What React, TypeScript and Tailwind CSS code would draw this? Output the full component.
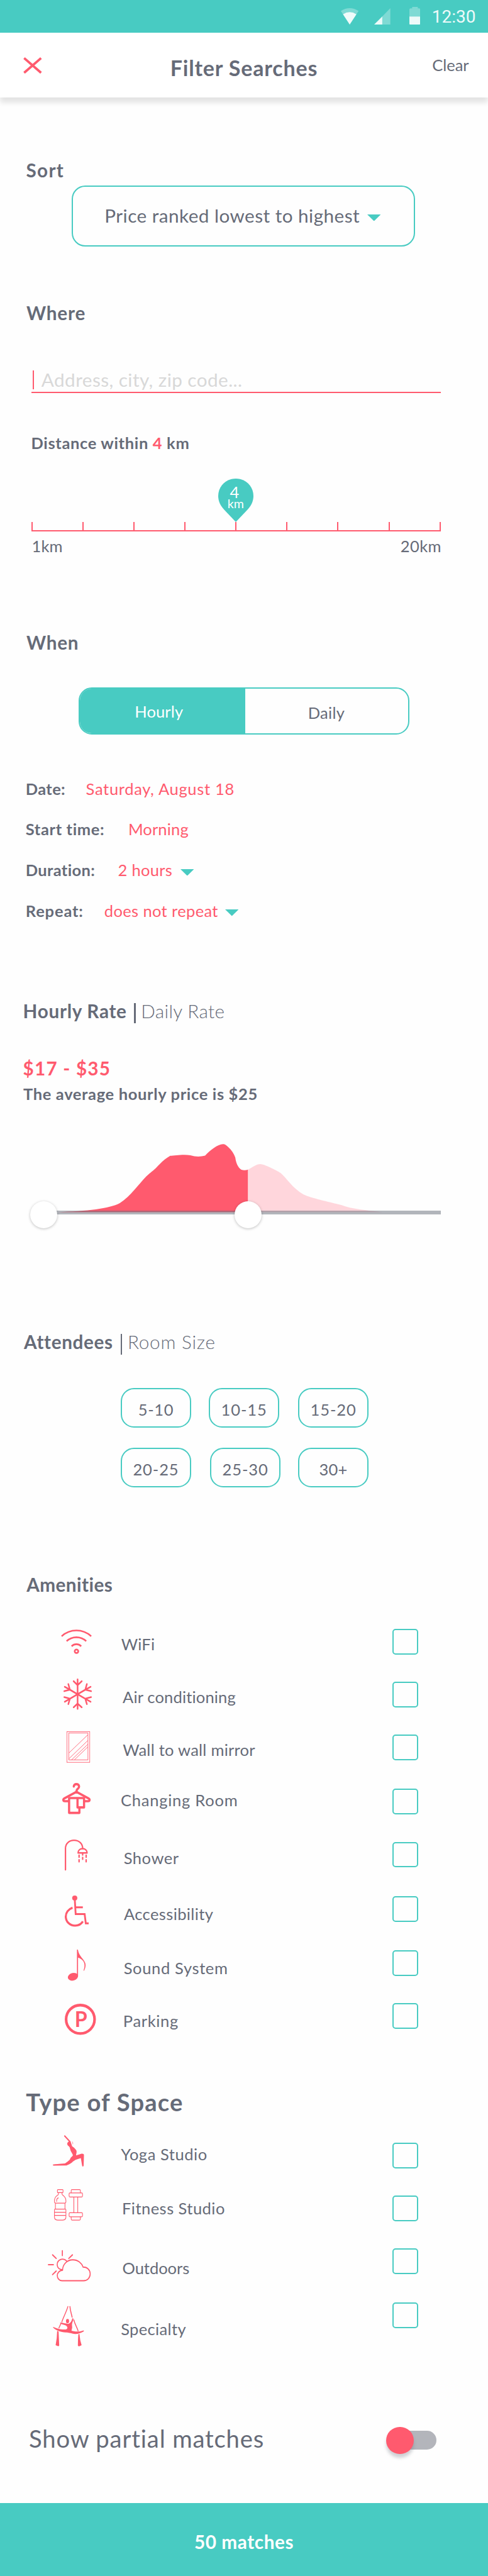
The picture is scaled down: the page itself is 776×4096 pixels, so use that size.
import type { ReactNode } from "react";

const Caret = ({ className }: { className: string }) => (
  <svg className={className} width="21.5" height="10.6" viewBox="0 0 22 11" preserveAspectRatio="none">
    <path d="M0 0H22L11 11Z" fill="#48cbc2" />
  </svg>
);

const WifiIcon = () => (
  <svg width="49" height="38.9" viewBox="393 429 198 149" preserveAspectRatio="none" className="overflow-visible" fill="none" stroke="#ff5a6e" strokeWidth="10.5">
    <path d="M397 470C451 423 533 423 587 470M429 500C464 468 520 468 555 500M461 531C479 515 505 515 523 531" />
    <ellipse cx="492.5" cy="562" rx="11.5" ry="10.5" />
  </svg>
);

const SnowIcon = () => (
  <svg width="44.8" height="49.6" viewBox="409 726 181 190" preserveAspectRatio="none" className="overflow-visible" fill="none" stroke="#ff5a6e" strokeWidth="10" strokeLinecap="round" strokeLinejoin="round">
    <path d="M499.500 731V911M474 742L499.500 766L526 742M474 901L499.500 878L526 901" />
    <path d="M417 776L450 794L549 849L583 867M440 760L450 794L414 803M559 882L549 849L586 839" />
    <path d="M583 776L549 794L450 849L417 867M559 760L549 794L586 803M440 882L450 849L414 839" />
  </svg>
);

const MirrorIcon = () => (
  <svg width="37.1" height="49.6" viewBox="427 1048 150 190" preserveAspectRatio="none" className="overflow-visible" fill="none" stroke="#ff5a6e" strokeWidth="3.4">
    <rect x="428.5" y="1049.5" width="147" height="187" />
    <rect x="440.500" y="1058" width="123.500" height="163.500" />
    <path d="M441 1180L564 1068M441 1215L564 1103M459 1221L564 1126M477 1221L564 1142" />
  </svg>
);

const HangerIcon = () => (
  <svg width="45.300" height="49.4" viewBox="401 1362 183 189" preserveAspectRatio="none" className="overflow-visible" fill="none" stroke="#ff5a6e" strokeWidth="14" strokeLinecap="round" strokeLinejoin="round">
    <path d="M475 1384C475 1364 509 1364 509 1384C509 1400 492 1394 492 1416" />
    <path d="M440 1473H417C406 1473 405 1461 414 1456L492 1416L570 1456C580 1461 578 1473 567 1473H547" />
    <path d="M445 1454H541V1511H499V1454M445 1454V1544H511V1514" />
  </svg>
);

const ShowerIcon = () => (
  <svg width="36.6" height="49.4" viewBox="418 182 148 189" preserveAspectRatio="none" className="overflow-visible" fill="none" stroke="#ff5a6e" strokeWidth="9" strokeLinecap="round" strokeLinejoin="round">
    <path d="M422.500 366V236C422.500 205 448 186.500 478 186.500C508 186.500 533 206 533 236" />
    <path d="M503.500 263.500C503.500 248 516 237.500 532.500 237.500S561.500 248 561.500 263.500Z" />
    <path d="M510 277V289M510 305V317M533 266V276M533 291V302M555.500 277V289M555.500 305V317" />
  </svg>
);

const WheelchairIcon = () => (
  <svg width="37.900" height="49.6" viewBox="418 520 153 190" preserveAspectRatio="none" className="overflow-visible" fill="none" stroke="#ff5a6e" strokeWidth="11.500">
    <ellipse cx="482" cy="535.500" rx="16.500" ry="15.500" fill="#ff5a6e" stroke="none" />
    <path d="M482.500 548L488 633H545.500L553 689.500H571.500M488 592H534" />
    <path d="M468 594C440 603 424.500 625 424.500 648C424.500 680 451 703.500 484 703.500C507 703.500 525 693 534 678" strokeWidth="13" />
  </svg>
);

const NoteIcon = () => (
  <svg width="28" height="49.6" viewBox="436 850 113 190" preserveAspectRatio="none" className="overflow-visible" fill="#ff5a6e">
    <path d="M494 850H500C506 880 520 893 534 910C546 926 549.500 933 549.500 945C549.500 960 543 973 539 979L536 977C545 955 545 935 534 920C525 909 512 902 501 899V1010H494Z" />
    <ellipse cx="468.500" cy="1015.500" rx="33.500" ry="23" transform="rotate(-14 468.500 1015.500)" />
  </svg>
);

const ParkingIcon = () => (
  <svg width="49.500" height="49.6" viewBox="418 1180 200 190" preserveAspectRatio="none" className="overflow-visible">
    <ellipse cx="518" cy="1275" rx="91.500" ry="86.500" fill="none" stroke="#ff5a6e" strokeWidth="17" />
    <text x="482" y="1321.500" fill="#ff5a6e" className="font-['Lato',sans-serif] text-[130px] font-bold">P</text>
  </svg>
);

const YogaIcon = () => (
  <svg width="49.500" height="50" viewBox="340 327 200 169" preserveAspectRatio="none" className="overflow-visible" fill="#ff5a6e">
    <path d="M412 332Q414 326 419 329L447 354Q455 359 457 368L464 387Q478 393 490 407Q494 412 492.500 420L489 436L525 427Q540 426 540 434L538 490Q537 496 533 496Q529 496 528 490L520 450L486 460Q470 468 462 475Q444 486 428 490L344 491Q338 489 341 485Q360 482 418 479Q436 470 449 459Q452 448 468 438Q470 433 466 428Q452 412 448 392L444 388Q432 383 432 373Q434 365 443 361L414 335Z" />
    <path d="M465 362Q470 368 468 376" fill="none" stroke="#ff5a6e" strokeWidth="2.500" />
  </svg>
);

const FitnessIcon = () => (
  <svg width="45.800" height="49.700" viewBox="348 620 185 168" preserveAspectRatio="none" className="overflow-visible" fill="none" stroke="#ff5a6e" strokeWidth="4.300">
    <rect x="369.500" y="622" width="36" height="16.500" rx="3" />
    <path d="M376 638V645Q376 650 368 654C356 661 350.500 670 350.500 682V688Q350.500 694.500 357 694.500H418Q424 694.500 424 688V682C424 670 417 661 407 654Q399 650 399 645V638" />
    <path d="M356.500 695V727M418 695V727M350 744H424M350 760.500H424M364.500 687Q362 669 377 666" />
    <path d="M354 727H420Q424 727 424 731V770Q424 786 404 786H370Q350.500 786 350.500 770V731Q350.500 727 354 727Z" />
    <rect x="444.500" y="640" width="86" height="21.500" rx="5" />
    <rect x="444.500" y="746" width="86" height="22" rx="5" />
    <path d="M458 640V627Q458 622 463 622H511Q517 622 517 627V640M458 768V781Q458 786 463 786H511Q517 786 517 781V768M475 661V746M500 661V746" />
  </svg>
);

const WeatherIcon = () => (
  <svg width="68.300" height="49.400" viewBox="305 948 276 167" preserveAspectRatio="none" className="overflow-visible" fill="none" stroke="#ff5a6e" strokeWidth="6.500" strokeLinecap="round" strokeLinejoin="round">
    <path d="M398.500 951V977M335.500 973L359 992M463.500 973L440 992M309 1025.500H341M335.500 1079L359 1060" strokeWidth="7" />
    <path d="M427 1006C401 985 364.500 1000 365.500 1027C366.500 1042 380 1052 398 1053" />
    <path d="M400 1055.500C400 1025 428 999.500 466 999.500C498 999.500 522 1016 532 1038.500C560 1038.500 577.500 1055 577.500 1075C577.500 1096 560 1112 535 1112H397C378 1112 366 1099 366 1084C366 1069 380 1056 400 1055.500Z" />
  </svg>
);

const AerialIcon = () => (
  <svg width="49.500" height="63.900" viewBox="340 1247 200 216" preserveAspectRatio="none" className="overflow-visible" fill="#ff5a6e">
    <path d="M437 1249C428 1275 410 1303 398 1331M391 1342L379 1364" fill="none" stroke="#ff5a6e" strokeWidth="5.500" strokeLinecap="round" />
    <path d="M450 1249C452 1272 460 1290 464 1306M475 1321C482 1345 497 1363 502 1379" fill="none" stroke="#ff5a6e" strokeWidth="6" strokeLinecap="round" />
    <ellipse cx="434.500" cy="1327" rx="10" ry="11.500" />
    <path d="M341 1361Q343 1356 348 1360C380 1372 410 1373 424 1372Q434 1370 434 1361C428 1345 400 1348 388 1340Q384 1335 390 1335C410 1337 430 1342 440 1342Q458 1336 464 1316Q468 1308 472 1314C472 1325 464 1335 463 1345Q467 1360 460 1379C490 1386 515 1384 537 1377Q541 1378 539 1382C515 1394 490 1400 465 1394C450 1390 430 1388 425 1388C390 1386 360 1378 341 1361Z" />
    <path d="M368 1379L377 1384L381 1458Q375 1464 371 1461L358 1457Q367 1420 368 1379ZM504 1398L511 1396Q514 1430 525 1457L512 1462Q503 1463 501 1458Q501 1425 504 1398Z" />
  </svg>
);

type Option = { label: string; row: string; iconBox: string; text: string; icon: ReactNode };

const amenities: Option[] = [
  { label: "WiFi", row: "h-[84.3px]", iconBox: "pl-[97.2px] pt-[11.2px]", text: "ml-[-3.8px] mt-[14.2px] tracking-[0.2px]", icon: <WifiIcon /> },
  { label: "Air conditioning", row: "h-[83.8px]", iconBox: "pl-[101.2px] pt-[4.4px]", text: "ml-[-1.5px] mt-[14.1px] tracking-[0.17px]", icon: <SnowIcon /> },
  { label: "Wall to wall mirror", row: "h-[86.3px]", iconBox: "pl-[105.7px] pt-[4.8px]", text: "ml-[-1.3px] mt-[14.1px] tracking-[0.26px]", icon: <MirrorIcon /> },
  { label: "Changing Room", row: "h-[84.3px]", iconBox: "pl-[99.2px] pt-[0.5px]", text: "ml-[-4.5px] mt-[7.5px] tracking-[0.75px]", icon: <HangerIcon /> },
  { label: "Shower", row: "h-[86.3px]", iconBox: "pl-[103.4px] pt-[6.7px]", text: "ml-[0.2px] mt-[15.8px] tracking-[0.53px]", icon: <ShowerIcon /> },
  { label: "Accessibility", row: "h-[85.9px]", iconBox: "pl-[103.4px] pt-[8.7px]", text: "ml-[0.4px] mt-[17.8px] tracking-[0.4px]", icon: <WheelchairIcon /> },
  { label: "Sound System", row: "h-[84.3px]", iconBox: "pl-[107.9px] pt-[9px]", text: "ml-[0.2px] mt-[18.4px] tracking-[0.65px]", icon: <NoteIcon /> },
  { label: "Parking", row: "h-[70px]", iconBox: "pl-[103.4px] pt-[10.9px]", text: "ml-[-0.7px] mt-[18.2px] tracking-[0.66px]", icon: <ParkingIcon /> },
];

const spaces: Option[] = [
  { label: "Yoga Studio", row: "h-[84.2px] pt-[3.8px]", iconBox: "pl-[84.1px]", text: "ml-[-4.3px] mt-[9.9px] tracking-[0.56px]", icon: <YogaIcon /> },
  { label: "Fitness Studio", row: "h-[84px] pt-[6px]", iconBox: "pl-[86.1px] pt-[0.3px]", text: "ml-[-2.5px] mt-[9.7px] tracking-[0.46px]", icon: <FitnessIcon /> },
  { label: "Outdoors", row: "h-[86.3px] pt-[6px]", iconBox: "pl-[75.5px] pt-[13.2px]", text: "ml-[-2px] mt-[20.6px] tracking-[-0.05px]", icon: <WeatherIcon /> },
  { label: "Specialty", row: "h-[90px] pt-[6px]", iconBox: "pl-[84.1px] pt-[15.3px]", text: "ml-[-4.3px] mt-[31.2px] tracking-[0.35px]", icon: <AerialIcon /> },
];

const OptionRow = ({ label, row, iconBox, text, icon, box }: Option & { box: string }) => (
  <label className={`flex shrink-0 items-start ${row}`}>
    <span className={`block w-[196.5px] shrink-0 ${iconBox}`}>{icon}</span>
    <span className={`w-[300px] shrink-0 ${text}`}>{label}</span>
    <span className={`mr-[111px] ml-auto h-[40.8px] w-[40.8px] rounded-[5px] border-2 border-[#48cbc2] ${box}`} />
  </label>
);

const Chip = ({ children, className }: { children: string; className: string }) => (
  <button className={`flex h-[62.6px] w-[112px] shrink-0 items-center justify-center rounded-[21px] border-2 border-[#48cbc2] pt-[5px] ${className}`}>
    {children}
  </button>
);

export default function App() {
  return (
    <div className="flex h-[4096px] w-[776px] flex-col overflow-hidden bg-[#fefefe] font-['Lato',sans-serif] text-[25.5px] leading-[40px] whitespace-nowrap text-[#666b78]">
      <div className="flex h-[51.7px] shrink-0 items-start bg-[#48cbc2] pl-[541.9px]">
        <svg className="mt-[13px]" width="28.2" height="26" viewBox="0 0 57 99" preserveAspectRatio="none" fill="#fff">
          <path d="M0 17Q28.500 -17 57 17L28.500 99Z" opacity=".3" />
          <path d="M7 37Q28.500 11 50 37L28.500 99Z" opacity=".88" />
        </svg>
        <svg className="ml-[24.8px] mt-[13px]" width="25.700" height="26" viewBox="0 0 52 99" preserveAspectRatio="none" fill="#fff">
          <path d="M52 0V99H26V50Z" opacity=".3" />
          <path d="M26 50V99H0Z" opacity=".9" />
        </svg>
        <svg className="ml-[30.2px] mt-[10.7px]" width="17.300" height="28.300" viewBox="0 0 35 108" preserveAspectRatio="none" fill="#fff">
          <path d="M9 0H27V9H31Q35 9 35 16V58H0V16Q0 9 4 9H9Z" opacity=".3" />
          <path d="M0 58H35V101Q35 108 31 108H4Q0 108 0 101Z" opacity=".9" />
        </svg>
        <span className="mt-[7px] ml-[18.7px] font-['Roboto'] text-[28px] text-white/90">12:30</span>
      </div>

      <header className="z-10 flex h-[103.5px] shrink-0 items-start bg-white pl-[37.1px] shadow-[0_8px_8px_rgba(0,0,0,0.11)]">
        <svg className="mt-[38.9px]" width="29.7" height="26.2" viewBox="0 0 30 26" fill="none" stroke="#ff5a6e" strokeWidth="3.800">
          <path d="M1.400 1.200L28.600 24.800M28.600 1.200L1.400 24.800" />
        </svg>
        <h1 className="mt-[32.5px] ml-[203.9px] w-[240px] text-[34px] leading-[48px] font-bold tracking-[0.84px]">Filter Searches</h1>
        <button className="mt-[31px] ml-[176.7px] tracking-[-0.07px]">Clear</button>
      </header>

      <h2 className="mt-[96.2px] ml-[41.5px] text-[29.7px] font-bold tracking-[1.3px]">Sort</h2>
      <button className="mt-[4px] ml-[114.3px] flex h-[96.7px] w-[545.4px] shrink-0 items-center rounded-[21.5px] border-2 border-[#48cbc2] pb-[2.4px] pl-[50px] text-left text-[29.7px]">
        <span className="w-[417.7px] tracking-[0.46px]">Price ranked lowest to highest</span>
        <Caret className="mt-[6.6px]" />
      </button>

      <h2 className="mt-[86px] ml-[42px] text-[29.7px] font-bold tracking-[0.82px]">Where</h2>
      <div className="mt-[70.5px] ml-[49.5px] flex h-[36.6px] w-[651.3px] shrink-0 items-start border-b-2 border-[#ff5a6e] pl-[2.5px]">
        <span className="h-[30px] w-[2px] bg-[#ff5a6e]" />
        <span className="ml-[11.8px] text-[29.7px] leading-[30px] tracking-[0.44px] text-[#d8d8d8]">Address, city, zip code...</span>
      </div>
      <p className="mt-[59.2px] ml-[49.5px] font-bold tracking-[0.65px]">
        Distance within <span className="text-[#ff5a6e]">4</span> km
      </p>
      <div className="relative mt-[36.6px] ml-[346.9px] flex h-[69px] w-[56px] shrink-0 flex-col items-center text-white">
        <svg className="absolute inset-0" width="56" height="69" viewBox="0 0 56 69" fill="#48cbc2">
          <path d="M28 0C44 0 56 12.500 56 27.500C56 36 52.500 43 46.500 49.500L28 69L9.500 49.500C3.500 43 0 36 0 27.500C0 12.500 12 0 28 0Z" />
        </svg>
        <span className="relative mt-[11.8px] pr-[4px] leading-[18px]">4</span>
        <span className="relative mt-[1.6px] text-[19.6px] leading-[18px]">km</span>
      </div>
      <div className="ml-[49.5px] flex h-[15px] w-[651.3px] shrink-0 justify-between border-b-2 border-[#ff5a6e]">
        {[1, 2, 3, 4, 5, 6, 7, 8, 9].map((n) => (
          <span key={n} className="w-[2px] bg-[#ff5a6e]" />
        ))}
      </div>
      <div className="mt-[2.9px] mr-[74px] ml-[50.5px] flex justify-between">
        <span className="tracking-[0.13px]">1km</span>
        <span className="tracking-[0.46px]">20km</span>
      </div>

      <h2 className="mt-[113.9px] ml-[42px] text-[29.7px] font-bold tracking-[0.71px]">When</h2>
      <div className="mt-[51.2px] ml-[125.2px] flex h-[75.3px] w-[525.6px] shrink-0 overflow-hidden rounded-[21px] border-2 border-[#48cbc2]">
        <button className="flex w-[263px] items-center justify-center bg-[#48cbc2] pt-[1px] pr-[12px] tracking-[0.13px] text-white">Hourly</button>
        <button className="flex flex-1 items-center justify-center pt-[5px] pr-[1px] tracking-[0.28px]">Daily</button>
      </div>

      <div className="mt-[65.6px] ml-[40.8px] flex flex-col gap-[24.67px]">
        <div className="flex items-start">
          <span className="w-[95.8px] font-bold tracking-[0.37px]">Date:</span>
          <span className="tracking-[0.67px] text-[#ff5a6e]">Saturday, August 18</span>
        </div>
        <div className="flex items-start">
          <span className="w-[163.1px] font-bold tracking-[0.63px]">Start time:</span>
          <span className="tracking-[0.15px] text-[#ff5a6e]">Morning</span>
        </div>
        <div className="flex items-start">
          <span className="w-[146.8px] font-bold tracking-[0.33px]">Duration:</span>
          <span className="w-[99.4px] tracking-[0.28px] text-[#ff5a6e]">2 hours</span>
          <Caret className="mt-[18.7px]" />
        </div>
        <div className="flex items-start">
          <span className="w-[125px] font-bold tracking-[0.83px]">Repeat:</span>
          <span className="w-[192px] tracking-[0.37px] text-[#ff5a6e]">does not repeat</span>
          <Caret className="mt-[18.7px]" />
        </div>
      </div>

      <div className="mt-[120.3px] ml-[36.6px] flex h-[40px] shrink-0 items-start text-[29.7px]">
        <h2 className="w-[176.7px] font-bold tracking-[0.71px]">Hourly Rate</h2>
        <span className="mt-[7.2px] h-[32px] w-[2.5px] bg-[#666b78]" />
        <span className="ml-[8.4px] font-light tracking-[0.37px]">Daily Rate</span>
      </div>
      <p className="mt-[50.6px] ml-[36.6px] text-[29.7px] font-bold tracking-[1.19px] text-[#ff5a6e]">$17 - $35</p>
      <p className="mt-[0.6px] ml-[37px] font-bold tracking-[0.65px]">The average hourly price is $25</p>

      <div className="relative mt-[59.6px] h-[135.8px] w-full shrink-0">
        <svg width="776" height="135.8" viewBox="0 980 1568 520" preserveAspectRatio="none">
          <path
            d="M186 1395C280 1388 350 1375 385 1340C420 1298 445 1225 470 1177C485 1150 490 1146 500 1128C515 1098 530 1070 547 1052C560 1051 590 1041 612 1049C628 1059 645 1058 659 1051C675 1017 700 982 716 981C724 981 727 989 733 998C745 1019 752 1040 756 1062C759 1110 770 1130 776 1137Q786 1143 797 1136V1395Z"
            fill="#ff5a6e"
          />
          <path
            d="M797 1136C810 1126 820 1104 837 1103C850 1104 885 1138 902 1157C920 1185 940 1250 975 1287C1000 1310 1060 1333 1098 1352C1125 1375 1190 1385 1228 1395H797Z"
            fill="#ffd6dc"
          />
        </svg>
        <span className="absolute top-[106px] left-[69px] h-[6.6px] w-[631.8px] bg-[#666b78]/50" />
        <span className="absolute top-[90.9px] left-[47.5px] h-[43.3px] w-[43.3px] rounded-full bg-white shadow-[0_1px_4px_rgba(0,0,0,0.25)]" />
        <span className="absolute top-[90.9px] left-[373.1px] h-[43.3px] w-[43.3px] rounded-full bg-white shadow-[0_1px_4px_rgba(0,0,0,0.25)]" />
      </div>

      <div className="mt-[159.3px] ml-[38.1px] flex h-[40px] shrink-0 items-start text-[29.7px]">
        <h2 className="w-[153.9px] font-bold tracking-[0.63px]">Attendees</h2>
        <span className="mt-[7.2px] h-[32.4px] w-[2px] bg-[#666b78]" />
        <span className="ml-[8.9px] font-light tracking-[0.79px]">Room Size</span>
      </div>
      <div className="mt-[53.4px] ml-[192px] flex flex-col gap-[32.3px]">
        <div className="flex">
          <Chip className="tracking-[0.65px]">5-10</Chip>
          <Chip className="ml-[28.1px] tracking-[0.9px]">10-15</Chip>
          <Chip className="ml-[30px] tracking-[0.9px]">15-20</Chip>
        </div>
        <div className="flex">
          <Chip className="tracking-[0.9px]">20-25</Chip>
          <Chip className="ml-[30.1px] tracking-[0.9px]">25-30</Chip>
          <Chip className="ml-[28px] tracking-[0.21px]">30+</Chip>
        </div>
      </div>

      <h2 className="mt-[135.2px] ml-[42.2px] text-[29.7px] font-bold tracking-[0.44px]">Amenities</h2>
      <div className="mt-[39.9px] flex shrink-0 flex-col">
        {amenities.map((o) => (
          <OptionRow key={o.label} {...o} box="mt-[10px]" />
        ))}
      </div>

      <h2 className="mt-[73.1px] ml-[41.3px] text-[38.2px] leading-[48px] font-bold tracking-[1.18px]">Type of Space</h2>
      <div className="mt-[24.8px] flex shrink-0 flex-col">
        {spaces.map((o, i) => (
          <OptionRow key={o.label} {...o} box={i === 0 ? "mt-[12.2px]" : "mt-[10px]"} />
        ))}
      </div>

      <div className="mt-[116.5px] ml-[46px] flex h-[48px] shrink-0 items-start text-[38.2px] leading-[48px]">
        <span className="mt-[0.8px] w-[575px] tracking-[0.86px]">Show partial matches</span>
        <span className="relative mt-[13.1px] h-[30.3px] w-[72.9px] rounded-full bg-[#b3b5bb]">
          <span className="absolute top-[-6.5px] left-[-6.8px] h-[43.3px] w-[43.3px] rounded-full bg-[#ff5a6e] shadow-[0_6px_5px_rgba(102,107,120,0.3)]" />
        </span>
      </div>

      <button className="mt-auto flex h-[116.3px] shrink-0 items-center justify-center bg-[#48cbc2] pt-[8px] text-[29.7px] font-bold tracking-[0.58px] text-white">
        50 matches
      </button>
    </div>
  );
}
